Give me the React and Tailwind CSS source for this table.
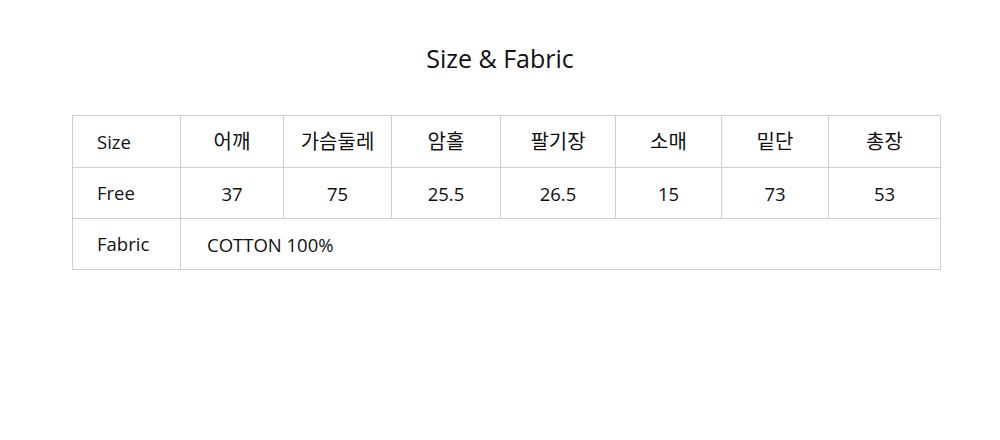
import React from 'react';

const headers = ['어깨', '가슴둘레', '암홀', '팔기장', '소매', '밑단', '총장'];
const values = ['37', '75', '25.5', '26.5', '15', '73', '53'];
const widths = ['w-[103px]', 'w-[108px]', 'w-[109px]', 'w-[115px]', 'w-[106px]', 'w-[107px]', 'w-[112px]'];

const font = { fontFamily: '"Open Sans", "Noto Sans CJK KR", sans-serif' };

export default function App() {
  return (
    <div className="w-[1000px] h-[440px] bg-white text-[#111]" style={font}>
      {/* Title */}
      <h1 className="pt-[43px] text-center text-[25px] leading-[30px] text-[#111]">Size &amp; Fabric</h1>

      {/* Table */}
      <div className="mt-[42px] ml-[72px] w-[869px]">
        <table className="w-full border-collapse table-fixed text-[18.5px]">
          <tbody>
            <tr className="h-[52px]">
              <td className="w-[108px] border border-[#cfcfcf] pl-[24px]">Size</td>
              {headers.map((h, i) => (
                <td key={h} className={`${widths[i]} border border-[#cfcfcf] text-center text-[20px]`}>
                  {h}
                </td>
              ))}
            </tr>
            <tr className="h-[51px]">
              <td className="border border-[#cfcfcf] pl-[24px]">Free</td>
              {values.map((v, i) => (
                <td key={i} className="border border-[#cfcfcf] text-center pt-[2px]">
                  {v}
                </td>
              ))}
            </tr>
            <tr className="h-[51px]">
              <td className="border border-[#cfcfcf] pl-[24px]">Fabric</td>
              <td colSpan={7} className="border border-[#cfcfcf] pl-[26px] pt-[2px]">
                COTTON 100%
              </td>
            </tr>
          </tbody>
        </table>
      </div>
    </div>
  );
}
